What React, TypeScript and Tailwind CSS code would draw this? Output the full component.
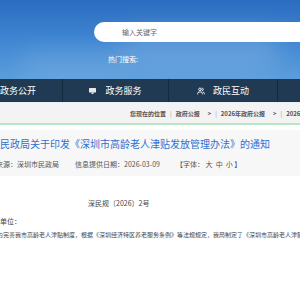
import { Users } from "lucide-react";

const cjk = { fontFamily: '"Noto Sans CJK SC", "Noto Sans", sans-serif' };

export default function App() {
  return (
    <div className="w-[300px] h-[300px] overflow-hidden bg-white" style={cjk}>
      {/* Header */}
      <header className="relative h-[79px] bg-gradient-to-b from-[#2b6cc0] via-[#3f86d2] to-[#5b9edc] overflow-hidden">
        <div className="absolute left-[120px] top-[30px] w-[160px] h-[40px] rounded-full bg-white/15 blur-md" />
        <div className="absolute left-[20px] top-[50px] w-[110px] h-[30px] rounded-full bg-white/10 blur-md" />
        <div className="relative pt-[22px]">
          <div className="ml-[94px] h-[20px] bg-white rounded-l-full flex items-center pl-[28px] text-[7px] text-[#666]">
            输入关键字
          </div>
          <p className="ml-[108px] mt-[14px] text-[7px] text-white leading-none">热门搜索:</p>
        </div>
      </header>

      {/* Nav */}
      <nav className="h-[24px] bg-[#1f3a52] flex text-white text-[9px] border-b border-[#e8eef2]">
        <div className="w-[63px] shrink-0 flex items-center border-r border-[#142a3c]">政务公开</div>
        <div className="w-[106px] shrink-0 flex items-center justify-center gap-[9px] border-r border-[#142a3c]">
          <svg width="7" height="6" viewBox="0 0 7 6">
            <rect x="0" y="0" width="7" height="4.5" rx="0.5" fill="#e5e9ee" />
            <rect x="2.5" y="4.5" width="2" height="1.5" fill="#e5e9ee" />
          </svg>
          <span>政务服务</span>
        </div>
        <div className="w-[109px] shrink-0 flex items-center justify-center gap-[8px] border-r border-[#142a3c]">
          <Users size={8} strokeWidth={3} className="text-[#e5e9ee]" />
          <span>政民互动</span>
        </div>
        <div className="flex-1" />
      </nav>

      {/* Breadcrumb */}
      <div className="h-[22px] bg-[#f3f3f3] border-b-2 border-[#b8e6c2] flex items-center pl-[130px] text-[6px] text-[#555] font-bold whitespace-nowrap gap-[4px]">
        <span>您现在的位置</span>
        <span className="text-[#999] font-normal">|</span>
        <span>政府公报</span>
        <span className="ml-[4px]">&gt;</span>
        <span className="text-[#999] font-normal">|</span>
        <span>2026年政府公报</span>
        <span className="ml-[4px]">&gt;</span>
        <span className="text-[#999] font-normal">|</span>
        <span>2026年第1期</span>
      </div>

      {/* Title box */}
      <div className="mt-[5px] h-[46px] bg-[#f7f7f7] flex flex-col whitespace-nowrap">
        <h1 className="mt-[8px] text-[10px] leading-[12px] text-[#2f6fd0]">
          民政局关于印发《深圳市高龄老人津贴发放管理办法》的通知
        </h1>
        <div className="mt-[10px] flex text-[7px] leading-[9px] text-[#555] -ml-[4px]">
          <span>来源：深圳市民政局</span>
          <span className="ml-[16px]">信息提供日期：2026-03-09</span>
          <span className="ml-[16px]">【字体：&nbsp;大&nbsp;&nbsp;中&nbsp;&nbsp;小&nbsp;】</span>
        </div>
      </div>

      {/* Body */}
      <div className="text-[#444] whitespace-nowrap">
        <p className="mt-[23px] ml-[88px] text-[7px] leading-[8px]">深民规〔2026〕2号</p>
        <p className="mt-[10px] -ml-[7px] text-[7px] leading-[8px]">各单位：</p>
        <p className="mt-[6px] -ml-[3px] text-[6px] leading-[8px]">
          为完善我市高龄老人津贴制度，根据《深圳经济特区养老服务条例》等法规规定，我局制定了《深圳市高龄老人津贴发放管理办法》
        </p>
      </div>
    </div>
  );
}
